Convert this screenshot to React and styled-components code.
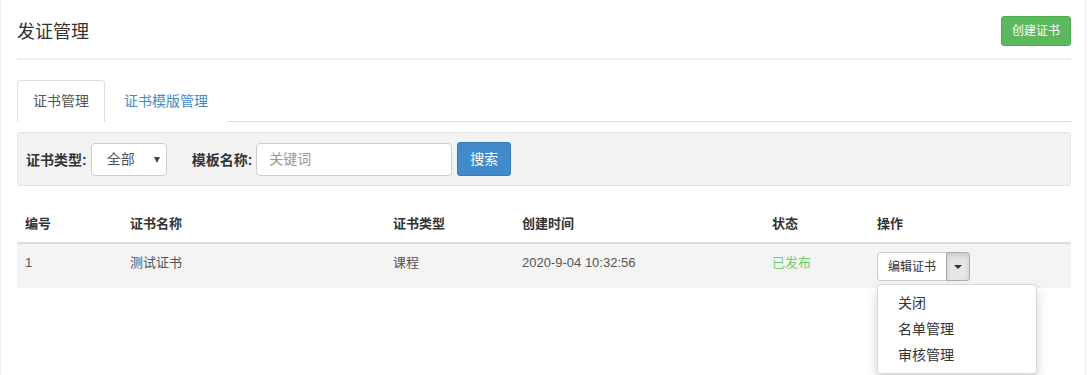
import React from 'react';
import styled, { createGlobalStyle } from 'styled-components';

const GlobalStyle = createGlobalStyle`
    body {
        margin: 0;
        background: #fff;
        font-family: "Liberation Sans", Arial, "Noto Sans CJK SC", sans-serif;
        font-size: 13px;
        color: #333;
    }
    * { box-sizing: border-box; }
`;

const Page = styled.div`
    width: 1086px;
    min-height: 375px;
    border-left: 1px solid #ececec;
    border-right: 1px solid #ececec;
    padding: 0 14px 0 16px;
`;

const Header = styled.div`
    display: flex;
    justify-content: space-between;
    align-items: flex-start;
    padding-top: 16px;
    height: 60px;
    border-bottom: 2px solid #eee;
`;

const Title = styled.h1`
    margin: 4px 0 0;
    font-size: 18px;
    font-weight: normal;
    line-height: 24px;
    color: #333;
`;

const Button = styled.button`
    font-family: inherit;
    font-size: ${p => p.$size || 13}px;
    height: ${p => p.$h || 29}px;
    padding: 0 ${p => p.$px || 10}px;
    border-radius: 3px;
    border: 1px solid ${p => p.$border || '#ccc'};
    background: ${p => p.$bg || '#fff'};
    color: ${p => p.$color || '#333'};
    cursor: pointer;
    line-height: 1;
`;

const Tabs = styled.ul`
    display: flex;
    list-style: none;
    margin: 20px 0 0;
    padding: 0;
    border-bottom: 1px solid #ddd;
    height: 42px;
`;

const Tab = styled.li`
    height: 42px;
    padding: 0 ${p => (p.$active ? 15 : 18)}px;
    line-height: 41px;
    font-size: 14px;
    color: ${p => (p.$active ? '#555' : '#428bca')};
    background: #fff;
    border: 1px solid ${p => (p.$active ? '#ddd' : 'transparent')};
    border-bottom-color: ${p => (p.$active ? '#fff' : 'transparent')};
    border-radius: 4px 4px 0 0;
    cursor: pointer;
`;

const FilterPanel = styled.div`
    display: flex;
    align-items: center;
    margin-top: 10px;
    height: 54px;
    padding: 0 8px;
    background: #f3f3f3;
    border: 1px solid #e3e3e3;
    border-radius: 3px;
`;

const Label = styled.label`
    font-weight: bold;
    font-size: 14px;
    color: #333;
    margin-right: 4px;
    margin-left: ${p => p.$ml || 0}px;
`;

const SelectBox = styled.div`
    position: relative;
    width: 76px;
    height: 33px;
    border: 1px solid #ccc;
    border-radius: 4px;
    background: #fff;
    padding-left: 15px;
    line-height: 31px;
    font-size: 14px;
    color: #555;

    &::after {
        content: '';
        position: absolute;
        right: 6px;
        top: 13px;
        border-left: 3.5px solid transparent;
        border-right: 3.5px solid transparent;
        border-top: 6px solid #444;
    }
`;

const TextInput = styled.input`
    width: 196px;
    height: 33px;
    border: 1px solid #ccc;
    border-radius: 4px;
    padding: 0 12px;
    font-family: inherit;
    font-size: 14px;
    color: #555;
    &::placeholder { color: #999; }
`;

const Table = styled.table`
    width: 100%;
    margin-top: 19px;
    border-collapse: collapse;
    font-size: 13px;
`;

const Th = styled.th`
    width: ${p => p.$w}px;
    text-align: left;
    font-weight: bold;
    color: #333;
    padding: 9px 8px 8px;
    line-height: 20px;
    border-bottom: 2px solid #ddd;
`;

const Row = styled.tr`
    background: #f4f4f4;
`;

const Td = styled.td`
    padding: 9px 8px 7px;
    line-height: 20px;
    vertical-align: top;
    color: ${p => p.$color || '#555'};
`;

const Group = styled.div`
    position: relative;
    display: inline-flex;
    margin-top: -1px;
`;

const EditBtn = styled(Button)`
    border-radius: 3px 0 0 3px;
    width: 70px;
    padding: 0;
`;

const CaretBtn = styled(Button)`
    width: 24px;
    padding: 0;
    margin-left: -1px;
    border-radius: 0 3px 3px 0;
    background: #e6e6e6;
    border-color: #adadad;
    box-shadow: inset 0 3px 5px rgba(0, 0, 0, 0.125);
    display: flex;
    align-items: center;
    justify-content: center;

    &::after {
        content: '';
        border-left: 4px solid transparent;
        border-right: 4px solid transparent;
        border-top: 4px solid #333;
    }
`;

const Menu = styled.ul`
    position: absolute;
    top: 32px;
    left: 0;
    width: 160px;
    margin: 0;
    padding: 5px 0;
    list-style: none;
    background: #fff;
    border: 1px solid rgba(0, 0, 0, 0.15);
    border-radius: 4px;
    box-shadow: 0 6px 12px rgba(0, 0, 0, 0.175);
    z-index: 10;
`;

const MenuItem = styled.li`
    padding: 0 20px;
    line-height: 26px;
    font-size: 14px;
    color: #333;
    white-space: nowrap;
`;

export default function App() {
    return (
        <>
            <GlobalStyle />
            <Page>
                <Header>
                    <Title>发证管理</Title>
                    <Button $bg="#5cb85c" $border="#4cae4c" $color="#fff" $size={12} $h={30} $px={10}>创建证书</Button>
                </Header>

                <Tabs>
                    <Tab $active>证书管理</Tab>
                    <Tab>证书模版管理</Tab>
                </Tabs>

                <FilterPanel>
                    <Label>证书类型:</Label>
                    <SelectBox>全部</SelectBox>
                    <Label $ml={25}>模板名称:</Label>
                    <TextInput placeholder="关键词" />
                    <Button $bg="#428bca" $border="#357ebd" $color="#fff" $size={14} $h={34} $px={12} style={{ marginLeft: 5 }}>搜索</Button>
                </FilterPanel>

                <Table>
                    <thead>
                        <tr>
                            <Th $w={105}>编号</Th>
                            <Th $w={263}>证书名称</Th>
                            <Th $w={129}>证书类型</Th>
                            <Th $w={250}>创建时间</Th>
                            <Th $w={105}>状态</Th>
                            <Th>操作</Th>
                        </tr>
                    </thead>
                    <tbody>
                        <Row>
                            <Td>1</Td>
                            <Td>测试证书</Td>
                            <Td>课程</Td>
                            <Td>2020-9-04 10:32:56</Td>
                            <Td $color="#6fce6f">已发布</Td>
                            <Td>
                                <Group>
                                    <EditBtn $size={12}>编辑证书</EditBtn>
                                    <CaretBtn />
                                    <Menu>
                                        <MenuItem>关闭</MenuItem>
                                        <MenuItem>名单管理</MenuItem>
                                        <MenuItem>审核管理</MenuItem>
                                    </Menu>
                                </Group>
                            </Td>
                        </Row>
                    </tbody>
                </Table>
            </Page>
        </>
    );
}
